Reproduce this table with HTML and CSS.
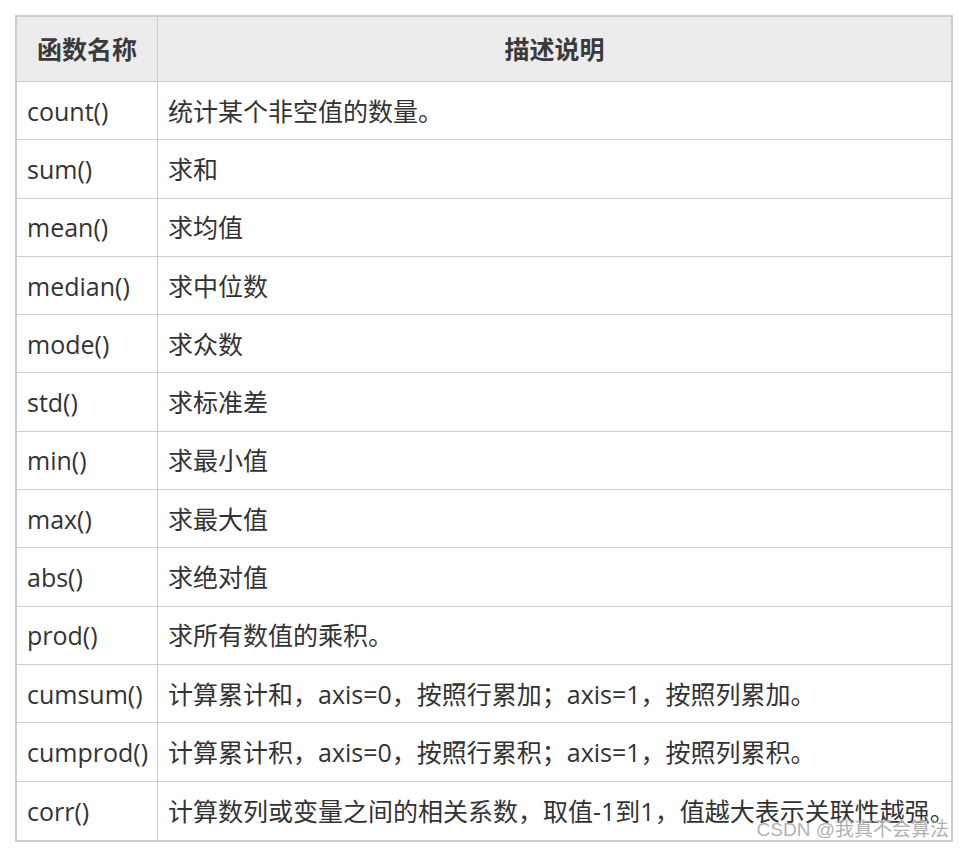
FILE: index.html
```html
<!DOCTYPE html>
<html lang="zh-CN">
<head>
<meta charset="utf-8">
<title>函数说明</title>
<link rel="stylesheet" href="styles.css">
</head>
<body>
<div class="wrap">
  <table class="fn-table">
    <thead>
      <tr>
        <th class="col-name">函数名称</th>
        <th class="col-desc">描述说明</th>
      </tr>
    </thead>
    <tbody>
      <tr><td>count()</td><td>统计某个非空值的数量。</td></tr>
      <tr><td>sum()</td><td>求和</td></tr>
      <tr><td>mean()</td><td>求均值</td></tr>
      <tr><td>median()</td><td>求中位数</td></tr>
      <tr><td>mode()</td><td>求众数</td></tr>
      <tr><td>std()</td><td>求标准差</td></tr>
      <tr><td>min()</td><td>求最小值</td></tr>
      <tr><td>max()</td><td>求最大值</td></tr>
      <tr><td>abs()</td><td>求绝对值</td></tr>
      <tr><td>prod()</td><td>求所有数值的乘积。</td></tr>
      <tr><td>cumsum()</td><td>计算累计和，axis=0，按照行累加；axis=1，按照列累加。</td></tr>
      <tr><td>cumprod()</td><td>计算累计积，axis=0，按照行累积；axis=1，按照列累积。</td></tr>
      <tr><td>corr()</td><td>计算数列或变量之间的相关系数，取值-1到1，值越大表示关联性越强。</td></tr>
    </tbody>
  </table>
  <div class="watermark">CSDN @我真不会算法</div>
</div>
</body>
</html>
```

FILE: styles.css
```css
html, body {
  margin: 0;
  padding: 0;
  background: #ffffff;
}

body {
  font-family: "Open Sans", "Noto Sans CJK SC", sans-serif;
  color: #333333;
}

.wrap {
  position: relative;
  padding: 15px 0 0 15px;
  width: 938px;
}

.fn-table {
  width: 938px;
  border-collapse: separate;
  border-spacing: 0;
  border: 2px solid #cccccc;
  table-layout: fixed;
  font-size: 25px;
}

.fn-table th,
.fn-table td {
  padding: 0 0 0 10px;
  border-right: 1px solid #cccccc;
  border-bottom: 1px solid #cccccc;
  text-align: left;
  vertical-align: middle;
  white-space: nowrap;
  line-height: 1.2;
}

.fn-table th:last-child,
.fn-table td:last-child {
  border-right: none;
}

.fn-table tbody tr:last-child td {
  border-bottom: none;
}

.fn-table th {
  background: #ececec;
  font-weight: 700;
  text-align: center;
  padding: 0;
  height: 64px;
  color: #3a3a3a;
}

.fn-table .col-name {
  width: 140px;
}

.fn-table td {
  height: 57.3px;
  box-sizing: border-box;
}

.fn-table tbody td {
  height: 58.3px;
}

.watermark {
  position: absolute;
  right: 4px;
  bottom: 1px;
  font-family: "Liberation Sans", "Noto Sans CJK SC", sans-serif;
  font-size: 19px;
  line-height: 22px;
  color: rgba(150, 150, 150, 0.75);
  text-shadow: 0 0 1px #ffffff;
}
```
